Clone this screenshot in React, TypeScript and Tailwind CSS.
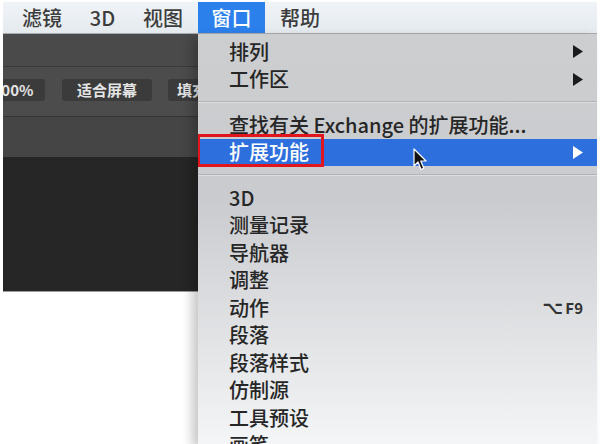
import React from "react";

const Arrow = ({ white = false }: { white?: boolean }) => (
  <svg width="10" height="13" viewBox="0 0 10 13">
    <path d="M0 0 L10 6.5 L0 13 Z" fill={white ? "#ffffff" : "#1b1b1b"} />
  </svg>
);

const Row = ({ children, right }: { children: React.ReactNode; right?: React.ReactNode }) => (
  <div className="h-[27.5px] flex items-center justify-between pl-[31px] pr-[14px] text-[#262626]">
    <span>{children}</span>
    {right}
  </div>
);

const Sep = () => (
  <div className="h-[18px] flex flex-col justify-center">
    <div className="h-px bg-[#b2b3b5]" />
    <div className="h-px bg-[#dcdde0]" />
  </div>
);

export default function App() {
  return (
    <div className="w-[600px] h-[444px] bg-white overflow-hidden pt-[2px] px-[3px] font-['Noto_Sans_CJK_SC',sans-serif]">
      {/* menubar */}
      <div className="h-[32px] flex items-center bg-gradient-to-b from-[#f0f4f8] to-[#e5eaef] border-b border-[#a9abae] text-[20px] font-medium text-[#3c3c3c] pl-[4px]">
        <div className="w-[70px] h-full flex items-center justify-center">滤镜</div>
        <div className="w-[51px] h-full flex items-center justify-center">3D</div>
        <div className="w-[70px] h-full flex items-center justify-center">视图</div>
        <div className="w-[67px] h-full flex items-center justify-center bg-[#2c80ec] text-white">窗口</div>
        <div className="w-[70px] h-full flex items-center justify-center">帮助</div>
      </div>

      <div className="flex items-start">
        {/* dark panel */}
        <div className="w-[195px] shrink-0 flex flex-col overflow-hidden border-b border-[#9c9c9c]">
          <div className="h-[33px] bg-[#4a4a4a] border-b border-[#3a3a3a]" />
          <div className="h-[49px] bg-[#4c4c4c] pt-[12px] flex gap-[17px]">
            <div className="ml-[-22px] w-[64px] shrink-0 h-[22px] rounded-[3px] bg-[#3b3b3b] flex items-center justify-center text-[15px] font-bold text-[#e4e4e4]">100%</div>
            <div className="w-[90px] shrink-0 h-[22px] rounded-[3px] bg-[#3b3b3b] flex items-center justify-center text-[15px] font-bold text-[#e4e4e4]">适合屏幕</div>
            <div className="w-[60px] shrink-0 h-[22px] rounded-[3px] bg-[#3b3b3b] flex items-center pl-[9px] text-[15px] font-bold text-[#e4e4e4] ml-[-1px]">填充</div>
          </div>
          <div className="h-[41px] bg-[#454545] border-t border-[#343434]" />
          <div className="h-[134px] bg-[#262626]" />
        </div>

        {/* dropdown menu */}
        <div className="w-[399px] h-[410px] shrink-0 overflow-hidden pt-[4px] bg-[linear-gradient(to_bottom,#cdced0_0%,#c9cbce_40%,#f4f5f7_100%)] shadow-[-6px_4px_10px_rgba(0,0,0,0.22)] text-[20px] font-medium leading-none">
          <Row right={<Arrow />}>排列</Row>
          <Row right={<Arrow />}>工作区</Row>
          <Sep />
          <Row>查找有关 Exchange 的扩展功能...</Row>
          <div className="relative h-[27.5px] flex items-center justify-between pl-[31px] pr-[14px] bg-[#2d6fdc] text-white">
            <span>扩展功能</span>
            <Arrow white />
            <div className="absolute left-[-1px] top-[-4.5px] w-[127px] h-[33px] border-[3px] border-[#e2141c]" />
            <svg className="absolute left-[215px] top-[9px]" width="14" height="24" viewBox="0 0 14 24">
              <path d="M1 1 L1 18 L5 14 L8 21.5 L10.8 20.3 L7.8 13 L13 13 Z" fill="#111" stroke="#fff" strokeWidth="1.2" strokeLinejoin="round" />
            </svg>
          </div>
          <Sep />
          <Row>3D</Row>
          <Row>测量记录</Row>
          <Row>导航器</Row>
          <Row>调整</Row>
          <Row
            right={
              <span className="flex items-center gap-[2px] text-[#333] font-bold">
                <span className="font-['DejaVu_Sans',sans-serif] text-[18px]">⌥</span>
                <span className="text-[15px]">F9</span>
              </span>
            }
          >
            动作
          </Row>
          <Row>段落</Row>
          <Row>段落样式</Row>
          <Row>仿制源</Row>
          <Row>工具预设</Row>
          <Row>画笔</Row>
        </div>
      </div>
    </div>
  );
}
